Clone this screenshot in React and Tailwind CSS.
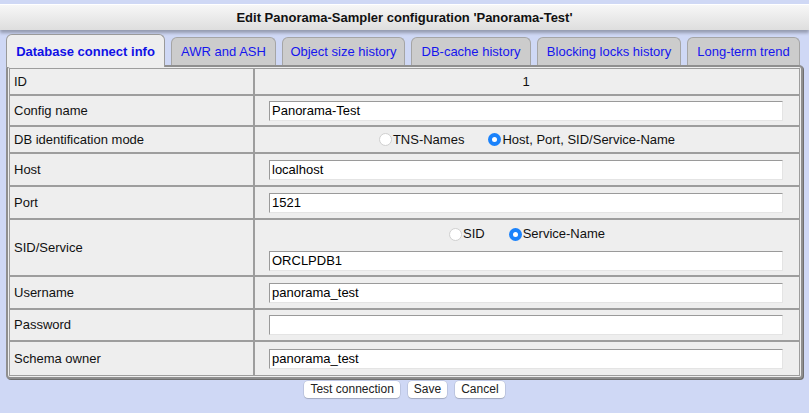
import { useState } from 'react'

const tabs = [
  ['Database connect info', 'w-[159px]'],
  ['AWR and ASH', 'w-[105px]'],
  ['Object size history', 'w-[123px]'],
  ['DB-cache history', 'w-[120px]'],
  ['Blocking locks history', 'w-[144px]'],
  ['Long-term trend', 'w-[113px]'],
]

function Radio({ checked, label }) {
  return (
    <label className="flex items-center gap-[1px]">
      <span
        className={`grid h-[13px] w-[13px] place-items-center rounded-full ${
          checked ? 'bg-[#1a82fb]' : 'border border-[#d0d0d0] bg-white'
        }`}
      >
        {checked && <span className="h-[5px] w-[5px] rounded-full bg-white" />}
      </span>
      <span>{label}</span>
    </label>
  )
}

function Field({ value }) {
  return (
    <div className="h-[20px] w-[514px] border border-t-[#9a9a9a] border-l-[#9a9a9a] border-r-[#e4e4e4] border-b-[#e4e4e4] bg-white pl-[2px] leading-[18px] text-black">
      {value}
    </div>
  )
}

function Row({ label, h, children, last }) {
  return (
    <div className={`flex ${last ? '' : 'border-b-2 border-[#9d9d9d]'}`} style={{ height: h }}>
      <div className="flex w-[245px] shrink-0 items-center border-r-2 border-[#9d9d9d] pl-[4px]">{label}</div>
      <div className="flex flex-1 flex-col items-center justify-center pr-[2px]">{children}</div>
    </div>
  )
}

export default function App() {
  const [active] = useState(0)

  return (
    <div className="h-[413px] w-[809px] overflow-hidden bg-[#cfd8f5] text-[13px] text-[#111] [font-family:'Liberation_Sans',Arial,sans-serif]">
      <div className="h-[5px] border-b border-white bg-[#cfd8f5]" />
      <div className="flex h-[25px] items-center justify-center bg-[linear-gradient(#f7f7f7,#dedede)] text-[13px] font-bold shadow-[0_3px_3px_rgba(0,0,0,0.28)]">
        Edit Panorama-Sampler configuration 'Panorama-Test'
      </div>

      <div className="px-[6px] pt-[4px]">
        <div className="flex items-end gap-[6px] whitespace-nowrap">
          {tabs.map(([t, w], i) =>
            i === active ? (
              <div
                key={t}
                className={`relative z-10 -mb-[2px] flex h-[33px] shrink-0 items-center justify-center rounded-t-[6px] border border-b-0 border-[#9a9a9a] bg-[#eeeeee] pt-[1px] font-bold text-[#1010e6] ${w}`}
              >
                {t}
              </div>
            ) : (
              <div
                key={t}
                className={`flex h-[28px] shrink-0 items-center justify-center rounded-t-[6px] border border-b-0 border-[#a5a5a5] bg-[#cccccc] text-[#1515ee] ${w}`}
              >
                {t}
              </div>
            )
          )}
        </div>

        <div className="w-[797px] rounded-[4px] border-2 border-[#8f8f8f] bg-[#eeeeee] p-[1px] shadow-[1px_1px_0_#6f6f6f]">
          <div className="border border-[#9d9d9d]">
            <Row label="ID" h={27}>
              <span>1</span>
            </Row>
            <Row label="Config name" h={31}>
              <Field value="Panorama-Test" />
            </Row>
            <Row label="DB identification mode" h={27}>
              <div className="flex gap-[24px] pl-[2px]">
                <Radio label="TNS-Names" />
                <Radio checked label="Host, Port, SID/Service-Name" />
              </div>
            </Row>
            <Row label="Host" h={33}>
              <Field value="localhost" />
            </Row>
            <Row label="Port" h={33}>
              <Field value="1521" />
            </Row>
            <Row label="SID/Service" h={57}>
              <div className="flex gap-[24px] pb-[7px] pl-[2px]">
                <Radio label="SID" />
                <Radio checked label="Service-Name" />
              </div>
              <Field value="ORCLPDB1" />
            </Row>
            <Row label="Username" h={33}>
              <Field value="panorama_test" />
            </Row>
            <Row label="Password" h={32}>
              <Field value="" />
            </Row>
            <Row label="Schema owner" h={33} last>
              <Field value="panorama_test" />
            </Row>
          </div>
        </div>

        <div className="mt-[2px] flex justify-center gap-[8px] text-[12px]">
          {['Test connection', 'Save', 'Cancel'].map((b) => (
            <button
              key={b}
              className="h-[17px] rounded-[4px] bg-white px-[6px] leading-[17px] text-[#222] shadow-[0_0_0_0.5px_rgba(0,0,0,0.15),0_1px_1px_rgba(0,0,0,0.15)]"
            >
              {b}
            </button>
          ))}
        </div>
      </div>
    </div>
  )
}
